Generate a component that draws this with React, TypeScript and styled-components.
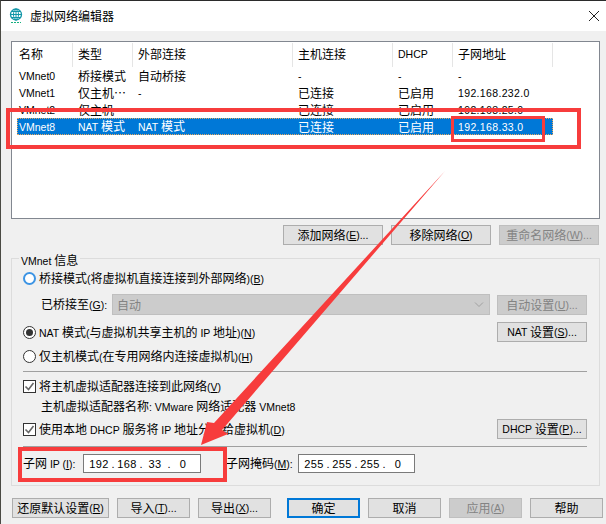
import React from 'react'
import styled, { createGlobalStyle } from 'styled-components'

const GlobalStyle = createGlobalStyle`
  html, body {
    margin: 0;
    padding: 0;
    background: #f0f0f0;
  }
  * {
    box-sizing: border-box;
  }
`

const Dialog = styled.div`
  position: relative;
  width: 606px;
  height: 524px;
  overflow: hidden;
  background: #f0f0f0;
  border-top: 1px solid #2b2b2b;
  border-left: 1px solid #4a4a44;
  color: #000;
  font-family: 'Noto Sans CJK SC', 'Noto Sans', sans-serif;
  font-size: 12px;
  line-height: 16px;
`

const Latin = styled.span<{ $spaced?: boolean }>`
  font-family: 'Liberation Sans', Arial, sans-serif;
  font-size: 10.5px;
  letter-spacing: ${(p) => (p.$spaced ? '0.35px' : '0')};
`

const TitleBar = styled.div`
  display: flex;
  align-items: center;
  height: 30px;
  padding: 0 7px 0 8px;
  background: #fff;
`

const TitleText = styled.span`
  margin-left: 7px;
  flex: 1;
`

const Content = styled.div`
  padding: 10px 6px 0 10px;
`

const ListBox = styled.div`
  width: 589px;
  height: 178px;
  padding: 1px 0 0 5px;
  background: #fff;
  border: 1px solid #828790;
`

const ListRow = styled.div<{ $selected?: boolean }>`
  display: grid;
  grid-template-columns: 56px 60px 160px 100px 60px 100px;
  width: 536px;
  height: 17px;
  align-items: center;
  color: ${(p) => (p.$selected ? '#fff' : '#000')};
  background: ${(p) => (p.$selected ? '#0078d7' : 'transparent')};
  outline: ${(p) => (p.$selected ? '1px dotted #e8a860' : 'none')};
  outline-offset: -1px;
`

const HeaderRow = styled(ListRow)`
  height: 24px;
  align-items: stretch;
`

const HeaderCell = styled.div`
  display: flex;
  align-items: center;
  padding: 0 0 2px 5px;
  border-right: 1px solid #e5e5e5;
  &:first-child {
    padding-left: 2px;
  }
`

const Cell = styled.div`
  padding: 0 0 2px 5px;
  white-space: nowrap;
  &:first-child {
    padding-left: 2px;
  }
`

const ButtonRow = styled.div`
  display: flex;
  justify-content: flex-end;
  gap: 8px;
  margin-top: 6px;
  width: 588px;
`

const Button = styled.div<{ $width: number; $disabled?: boolean; $primary?: boolean }>`
  display: flex;
  align-items: center;
  justify-content: center;
  flex: none;
  width: ${(p) => p.$width}px;
  height: 20px;
  white-space: pre;
  color: ${(p) => (p.$disabled ? '#838383' : '#000')};
  background: ${(p) => (p.$disabled ? '#cccccc' : '#e1e1e1')};
  border: ${(p) =>
    p.$primary ? '2px solid #0078d7' : p.$disabled ? '1px solid #bfbfbf' : '1px solid #adadad'};
`

const GroupBox = styled.div`
  position: relative;
  width: 589px;
  height: 228px;
  margin-top: 13px;
  padding: 9px 12px 0 11px;
  border: 1px solid #dcdcdc;
`

const Legend = styled.span`
  position: absolute;
  top: -7px;
  left: 7px;
  padding: 0 2px;
  background: #f0f0f0;
`

const OptionRow = styled.div<{ $height?: number; $top?: number }>`
  display: flex;
  align-items: center;
  height: ${(p) => p.$height ?? 20}px;
  margin-top: ${(p) => p.$top ?? 0}px;
  white-space: pre;
`

const Spacer = styled.div`
  flex: 1;
`

const Radio = styled.span<{ $checked?: boolean; $hover?: boolean }>`
  display: flex;
  align-items: center;
  justify-content: center;
  flex: none;
  width: 13px;
  height: 13px;
  margin-right: 3px;
  background: #fff;
  border-radius: 50%;
  border: ${(p) => (p.$hover ? '2px solid #3c94e4' : '1px solid #333')};
  &::after {
    content: '';
    display: ${(p) => (p.$checked ? 'block' : 'none')};
    width: 7px;
    height: 7px;
    border-radius: 50%;
    background: #333;
  }
`

const CheckBox = styled.span`
  display: flex;
  flex: none;
  width: 13px;
  height: 13px;
  margin-right: 3px;
  background: #fff;
  border: 1px solid #333;
`

const IndentLabel = styled.span<{ $width?: number }>`
  width: ${(p) => (p.$width ? `${p.$width}px` : 'auto')};
  margin-left: 18px;
  flex: none;
`

const Combo = styled.div`
  display: flex;
  align-items: center;
  justify-content: space-between;
  width: 378px;
  height: 21px;
  padding: 0 5px 0 4px;
  color: #838383;
  background: #cccccc;
  border: 1px solid #bfbfbf;
`

const Separator = styled.div<{ $top: number }>`
  height: 1px;
  margin-top: ${(p) => p.$top}px;
  background: #a0a0a0;
`

const FieldLabel = styled.span<{ $width: number; $left?: number }>`
  flex: none;
  width: ${(p) => p.$width}px;
  margin-left: ${(p) => p.$left ?? 0}px;
`

const IpInput = styled.div<{ $width: number }>`
  display: flex;
  align-items: center;
  flex: none;
  width: ${(p) => p.$width}px;
  height: 19px;
  padding-left: 4px;
  background: #fff;
  border: 1px solid #7a7a7a;
`

const IpPart = styled(Latin)`
  width: 22px;
  font-size: 11px;
  letter-spacing: 0.3px;
  text-align: center;
`

const IpDot = styled(Latin)`
  width: 6px;
  font-size: 11px;
  text-align: center;
`

const BottomBar = styled.div`
  display: flex;
  gap: 8px;
  margin: 12px 0 0 1px;
`

const OkGap = styled.div`
  width: 4px;
`

const RedFrame = styled.div<{ $left: number; $top: number; $width: number; $height: number; $line: number }>`
  position: absolute;
  left: ${(p) => p.$left}px;
  top: ${(p) => p.$top}px;
  width: ${(p) => p.$width}px;
  height: ${(p) => p.$height}px;
  border: ${(p) => p.$line}px solid #f73c3c;
  pointer-events: none;
`

const ArrowLayer = styled.svg`
  position: absolute;
  left: -1px;
  top: -1px;
  pointer-events: none;
`

// "&B" marks the mnemonic letter, ascii runs get the narrower latin face
const label = (text: string, spaced?: boolean) =>
  text.split(/([\x20-\x7e]+)/).map((run, i) => {
    if (!run) return null
    if (!/[\x20-\x7e]/.test(run)) return <span key={i}>{run}</span>
    const [before, after] = run.split('&')
    if (after === undefined) return <Latin key={i} $spaced={spaced}>{run}</Latin>
    return (
      <Latin key={i}>
        {before}
        <u>{after[0]}</u>
        {after.slice(1)}
      </Latin>
    )
  })

const columns = ['名称', '类型', '外部连接', '主机连接', 'DHCP', '子网地址']

const networks = [
  ['VMnet0', '桥接模式', '自动桥接', '-', '-', '-'],
  ['VMnet1', '仅主机…', '-', '已连接', '已启用', '192.168.232.0'],
  ['VMnet2', '仅主机…', '', '已连接', '已启用', '192.168.25.0'],
  ['VMnet8', 'NAT 模式', 'NAT 模式', '已连接', '已启用', '192.168.33.0'],
]

const IpField = ({ width, parts }: { width: number; parts: string[] }) => (
  <IpInput $width={width}>
    {parts.map((part, i) => (
      <React.Fragment key={i}>
        <IpPart>{part}</IpPart>
        {i < parts.length - 1 && <IpDot>.</IpDot>}
      </React.Fragment>
    ))}
  </IpInput>
)

const GlobeIcon = () => (
  <svg width="14" height="16" viewBox="0 0 14 16" fill="none" stroke="#1296a8" strokeWidth="1">
    <circle cx="7" cy="6.5" r="5.5" strokeWidth="1.3" />
    <ellipse cx="7" cy="6.5" rx="2.5" ry="5.5" />
    <path d="M1.5 6.5h11M2.5 3.5h9M2.5 9.5h9M7 1v11" />
    <path d="M2 14.5h10" stroke="#17b07f" strokeWidth="1.2" strokeDasharray="2 1" />
  </svg>
)

const CloseIcon = () => (
  <svg width="10" height="10" viewBox="0 0 10 10" stroke="#222" strokeWidth="1">
    <path d="M0 0l10 10M10 0L0 10" />
  </svg>
)

const CheckMark = () => (
  <svg width="11" height="11" viewBox="0 0 11 11" fill="none" stroke="#666" strokeWidth="1.6">
    <path d="M1.5 5.5l3 3 5-6.5" />
  </svg>
)

const Chevron = () => (
  <svg width="10" height="6" viewBox="0 0 10 6" fill="none" stroke="#a0a0a0" strokeWidth="1">
    <path d="M1 0.5l4 4 4-4" />
  </svg>
)

const App = () => (
  <>
    <GlobalStyle />
    <Dialog lang="zh-CN">
      <TitleBar>
        <GlobeIcon />
        <TitleText>虚拟网络编辑器</TitleText>
        <CloseIcon />
      </TitleBar>
      <Content>
        <ListBox>
          <HeaderRow>
            {columns.map((c) => (
              <HeaderCell key={c}>{label(c)}</HeaderCell>
            ))}
          </HeaderRow>
          {networks.map((row) => (
            <ListRow key={row[0]} $selected={row[0] === 'VMnet8'}>
              {row.map((value, i) => (
                <Cell key={i}>{label(value, i === 5)}</Cell>
              ))}
            </ListRow>
          ))}
        </ListBox>
        <ButtonRow>
          <Button $width={100}>{label('添加网络(&E)...')}</Button>
          <Button $width={100}>{label('移除网络(&O)')}</Button>
          <Button $width={100} $disabled>{label('重命名网络(&W)...')}</Button>
        </ButtonRow>
        <GroupBox>
          <Legend>{label('VMnet 信息')}</Legend>
          <OptionRow>
            <Radio $hover />
            <span>{label('桥接模式(将虚拟机直接连接到外部网络)(&B)')}</span>
          </OptionRow>
          <OptionRow $height={21} $top={6}>
            <IndentLabel $width={71}>{label('已桥接至(&G):')}</IndentLabel>
            <Combo>
              自动
              <Chevron />
            </Combo>
            <Spacer />
            <Button $width={90} $disabled>{label('自动设置(&U)...')}</Button>
          </OptionRow>
          <OptionRow $top={7}>
            <Radio $checked />
            <span>{label('NAT 模式(与虚拟机共享主机的 IP 地址)(&N)')}</span>
            <Spacer />
            <Button $width={90}>{label('NAT 设置(&S)...')}</Button>
          </OptionRow>
          <OptionRow $top={4}>
            <Radio />
            <span>{label('仅主机模式(在专用网络内连接虚拟机)(&H)')}</span>
          </OptionRow>
          <Separator $top={5} />
          <OptionRow $top={4}>
            <CheckBox>
              <CheckMark />
            </CheckBox>
            <span>{label('将主机虚拟适配器连接到此网络(&V)')}</span>
          </OptionRow>
          <OptionRow $height={18} $top={1}>
            <IndentLabel>{label('主机虚拟适配器名称: VMware 网络适配器 VMnet8')}</IndentLabel>
          </OptionRow>
          <OptionRow $top={4}>
            <CheckBox>
              <CheckMark />
            </CheckBox>
            <span>{label('使用本地 DHCP 服务将 IP 地址分配给虚拟机(&D)')}</span>
            <Spacer />
            <Button $width={90}>{label('DHCP 设置(&P)...')}</Button>
          </OptionRow>
          <Separator $top={7} />
          <OptionRow $height={19} $top={7}>
            <FieldLabel $width={60}>{label('子网 IP (&I):')}</FieldLabel>
            <IpField width={118} parts={['192', '168', '33', '0']} />
            <FieldLabel $width={72} $left={25}>{label('子网掩码(&M):')}</FieldLabel>
            <IpField width={117} parts={['255', '255', '255', '0']} />
          </OptionRow>
        </GroupBox>
        <BottomBar>
          <Button $width={97}>{label('还原默认设置(&R)')}</Button>
          <Button $width={73}>{label('导入(&T)...')}</Button>
          <Button $width={73}>{label('导出(&X)...')}</Button>
          <OkGap />
          <Button $width={73} $primary>确定</Button>
          <Button $width={73}>取消</Button>
          <Button $width={73} $disabled>{label('应用(&A)')}</Button>
          <Button $width={73}>帮助</Button>
        </BottomBar>
      </Content>
      <RedFrame $left={5} $top={107} $width={575} $height={41} $line={4} />
      <RedFrame $left={450} $top={115} $width={94} $height={26} $line={3} />
      <RedFrame $left={17} $top={446} $width={209} $height={35} $line={4} />
      <ArrowLayer width="606" height="524" viewBox="0 0 606 524">
        <polygon points="445,171 222,430 228,434 201,445 207,422 214,423" fill="#f73c3c" />
      </ArrowLayer>
    </Dialog>
  </>
)

export default App
